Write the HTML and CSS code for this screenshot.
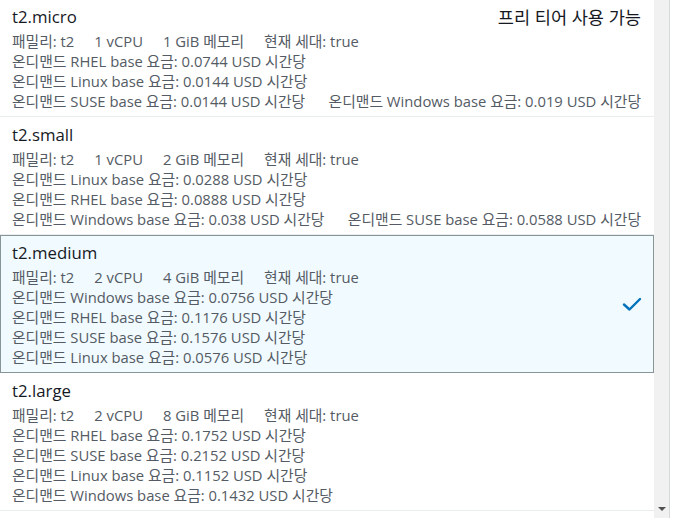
FILE: index.html
```html
<!DOCTYPE html>
<html lang="ko">
<head>
<meta charset="utf-8">
<link rel="stylesheet" href="styles.css">
</head>
<body>
<div class="frame">
  <div class="list">
    <div class="row">
      <div class="info">
        <div class="head"><span class="title">t2.micro</span><span class="badge">프리 티어 사용 가능</span></div>
        <div class="specs"><span>패밀리: t2</span><span>1 vCPU</span><span>1 GiB 메모리</span><span>현재 세대: true</span></div>
        <div class="line">온디맨드 RHEL base 요금: 0.0744 USD 시간당</div>
        <div class="line">온디맨드 Linux base 요금: 0.0144 USD 시간당</div>
        <div class="line split"><span>온디맨드 SUSE base 요금: 0.0144 USD 시간당</span><span>온디맨드 Windows base 요금: 0.019 USD 시간당</span></div>
      </div>
    </div>
    <div class="row">
      <div class="info">
        <div class="head"><span class="title">t2.small</span></div>
        <div class="specs"><span>패밀리: t2</span><span>1 vCPU</span><span>2 GiB 메모리</span><span>현재 세대: true</span></div>
        <div class="line">온디맨드 Linux base 요금: 0.0288 USD 시간당</div>
        <div class="line">온디맨드 RHEL base 요금: 0.0888 USD 시간당</div>
        <div class="line split"><span>온디맨드 Windows base 요금: 0.038 USD 시간당</span><span>온디맨드 SUSE base 요금: 0.0588 USD 시간당</span></div>
      </div>
    </div>
    <div class="row selected">
      <div class="info">
        <div class="head"><span class="title">t2.medium</span></div>
        <div class="specs"><span>패밀리: t2</span><span>2 vCPU</span><span>4 GiB 메모리</span><span>현재 세대: true</span></div>
        <div class="line">온디맨드 Windows base 요금: 0.0756 USD 시간당</div>
        <div class="line">온디맨드 RHEL base 요금: 0.1176 USD 시간당</div>
        <div class="line">온디맨드 SUSE base 요금: 0.1576 USD 시간당</div>
        <div class="line">온디맨드 Linux base 요금: 0.0576 USD 시간당</div>
      </div>
      <svg class="check" width="20" height="16" viewBox="0 0 20 16"><path d="M2 8.5 L7.5 13.5 L18 3" fill="none" stroke="#0073bb" stroke-width="2.4" stroke-linecap="round" stroke-linejoin="round"/></svg>
    </div>
    <div class="row">
      <div class="info">
        <div class="head"><span class="title">t2.large</span></div>
        <div class="specs"><span>패밀리: t2</span><span>2 vCPU</span><span>8 GiB 메모리</span><span>현재 세대: true</span></div>
        <div class="line">온디맨드 RHEL base 요금: 0.1752 USD 시간당</div>
        <div class="line">온디맨드 SUSE base 요금: 0.2152 USD 시간당</div>
        <div class="line">온디맨드 Linux base 요금: 0.1152 USD 시간당</div>
        <div class="line">온디맨드 Windows base 요금: 0.1432 USD 시간당</div>
      </div>
    </div>
  </div>
  <div class="scrollbar"><span class="arrow"></span></div>
  <div class="edge"></div>
</div>
</body>
</html>
```

FILE: styles.css
```css
html, body {
  margin: 0;
  padding: 0;
  height: 518px;
  overflow: hidden;
  background: #fff;
}
body {
  font-family: "Open Sans", "Noto Sans CJK KR", sans-serif;
  color: #545b64;
}
.frame {
  display: flex;
  height: 518px;
}
.list {
  width: 654px;
  flex: none;
  overflow: hidden;
}
.row {
  display: flex;
  align-items: flex-start;
  padding: 6px 13px 5px 12px;
  border-bottom: 1px solid #eaeded;
}
.row:first-child {
  padding-top: 5px;
}
.row.selected {
  border: 1px solid #879596;
  background: #f1faff;
  align-items: center;
  padding: 5px 12px 5px 11px;
}
.info {
  flex: 1;
  min-width: 0;
}
.head {
  display: flex;
  justify-content: space-between;
  align-items: flex-start;
  height: 24px;
  font-size: 16.8px;
  line-height: 24px;
  color: #16191f;
  margin-bottom: 2px;
}
.specs {
  display: flex;
  gap: 20px;
  font-size: 14.8px;
  line-height: 20px;
}
.line {
  font-size: 14.8px;
  line-height: 20px;
  white-space: nowrap;
}
.line.split {
  display: flex;
  justify-content: space-between;
}
.badge {
  white-space: nowrap;
  font-size: 17.6px;
  line-height: 24px;
}
.check {
  flex: none;
  margin-right: -1px;
}
.scrollbar {
  width: 15px;
  flex: none;
  background: #f1f1f1;
  display: flex;
  flex-direction: column;
  justify-content: flex-end;
  align-items: center;
  padding-bottom: 7px;
  box-sizing: border-box;
}
.arrow {
  width: 0;
  height: 0;
  border-left: 4px solid transparent;
  border-right: 4px solid transparent;
  border-top: 4px solid #505050;
}
.edge {
  flex: 1;
  border-left: 1px solid #d5dbdb;
  background: #fff;
}
```
